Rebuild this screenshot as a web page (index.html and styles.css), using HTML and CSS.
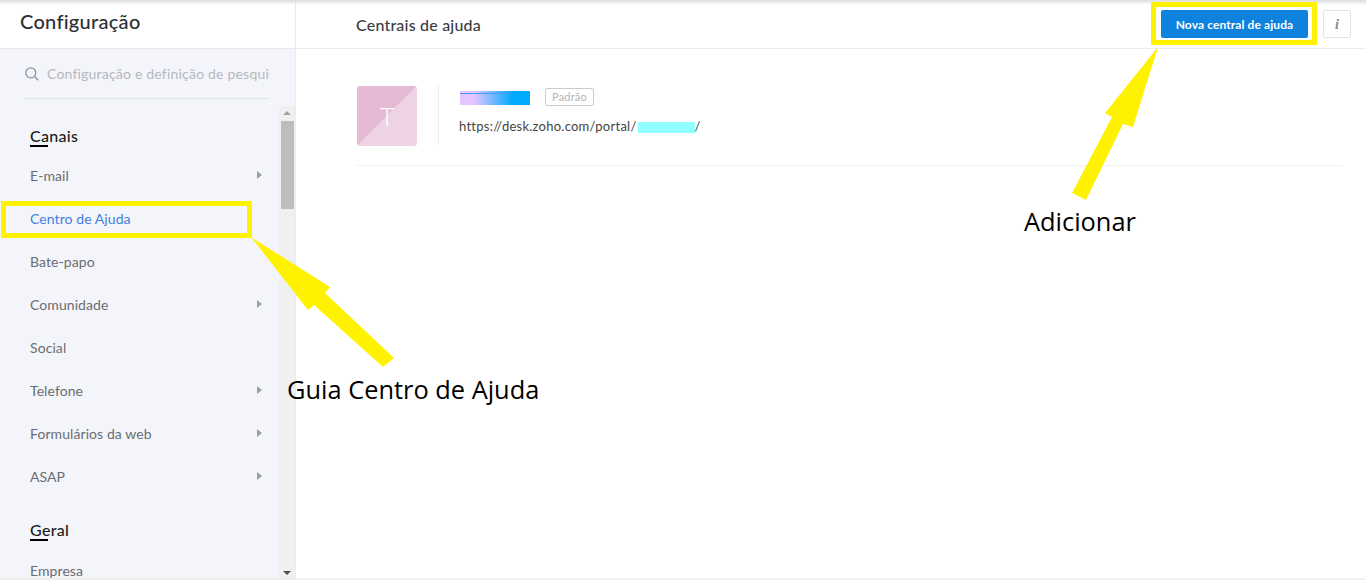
FILE: index.html
```html
<!DOCTYPE html>
<html lang="pt">
<head>
<meta charset="utf-8">
<title>Centrais de ajuda</title>
<link rel="stylesheet" href="styles.css">
</head>
<body>
<div class="app">
  <aside class="sidebar">
    <div class="side-head">Configuração</div>
    <div class="search">
      <svg class="search-icon" width="16" height="16" viewBox="0 0 16 16" fill="none" stroke="#8f949c" stroke-width="1.3"><circle cx="6.8" cy="6.8" r="5"/><path d="M10.5 10.5L14.2 14.2"/></svg>
      <span class="search-text">Configuração e definição de pesquisa</span>
    </div>
    <div class="side-body">
      <nav class="nav">
        <h3 class="sec">Canais</h3>
        <a class="item">E-mail<i class="caret"></i></a>
        <a class="item active">Centro de Ajuda</a>
        <a class="item">Bate-papo</a>
        <a class="item">Comunidade<i class="caret"></i></a>
        <a class="item">Social</a>
        <a class="item">Telefone<i class="caret"></i></a>
        <a class="item">Formulários da web<i class="caret"></i></a>
        <a class="item">ASAP<i class="caret"></i></a>
        <h3 class="sec sec-2">Geral</h3>
        <a class="item">Empresa</a>
      </nav>
      <div class="scrollbar">
        <i class="sb-up"></i>
        <div class="sb-thumb"></div>
        <i class="sb-down"></i>
      </div>
    </div>
  </aside>
  <main class="main">
    <header class="top">
      <h1 class="title">Centrais de ajuda</h1>
      <button class="btn">Nova central de ajuda</button>
      <button class="info">i</button>
    </header>
    <section class="card">
      <div class="avatar">T</div>
      <div class="sep"></div>
      <div class="meta">
        <div class="name-row"><span class="name-blur"></span><span class="badge">Padrão</span></div>
        <div class="url">https://desk.zoho.com/portal/<span class="url-blur"></span>/</div>
      </div>
    </section>
  </main>
</div>

<div class="mark mark-side"></div>
<div class="mark mark-btn"></div>
<svg class="arrows" width="1366" height="580" viewBox="0 0 1366 580">
  <polygon fill="#fff200" points="251,237 330,287 325,293 394,358 383,367 314,305 308,310"/>
  <polygon fill="#fff200" points="1158,47 1133,127 1123,124 1086,200 1072,193 1112,117 1105,113"/>
</svg>
<div class="note note-side">Guia Centro de Ajuda</div>
<div class="note note-btn">Adicionar</div>
</body>
</html>
```
FILE: styles.css
```css
* { box-sizing: border-box; }
html, body { margin: 0; height: 100%; overflow: hidden; background: #fff; }
body { font-family: "Lato", "Open Sans", sans-serif; color: #333; position: relative; }
.app { display: flex; height: 580px; }
.app::before {
  content: ""; position: absolute; left: 0; right: 0; top: 0; height: 5px;
  background: linear-gradient(#dcdcdc, rgba(255,255,255,0));
}
.app::after {
  content: ""; position: absolute; left: 0; right: 0; bottom: 0; height: 3px;
  background: linear-gradient(rgba(238,238,238,0), #ececec);
}
.sidebar { width: 296px; flex: none; display: flex; flex-direction: column; border-right: 1px solid #e9ebef; background: #f3f5fa; }
.side-head { height: 49px; background: #fff; border-bottom: 1px solid #e6e8ee; padding: 9px 0 0 20px; font-size: 20px; line-height: 25px; color: #2b2f36; font-weight: 500; flex: none; letter-spacing: .28px; }
.search { height: 50px; margin: 0 25px 0 24px; border-bottom: 1px solid #dfe2e9; display: flex; align-items: center; flex: none; overflow: hidden; }
.search-icon { flex: none; margin-right: 7px; }
.search-text { font-size: 14px; color: #b5b8bf; white-space: nowrap; letter-spacing: .2px; }
.side-body { flex: 1; display: flex; min-height: 0; }
.nav { flex: 1; overflow: hidden; padding-top: 24px; }
.sec { margin: 0 0 5px 30px; font-size: 16px; line-height: 25px; height: 26px; font-weight: 500; color: #1c1c1c; letter-spacing: .3px; position: relative; }
.sec::after { content: ""; position: absolute; left: 0; top: 22px; width: 18px; height: 2px; background: #000; }
.sec-2 { margin-top: 19px; margin-bottom: 6px; }
.item { display: flex; align-items: center; justify-content: space-between; height: 43px; padding: 0 17px 0 30px; font-size: 14px; color: #6a6d72; letter-spacing: .08px; }
.active { color: #3f7fe0; }
.caret { width: 0; height: 0; border-left: 5px solid #9b9ea3; border-top: 4px solid transparent; border-bottom: 4px solid transparent; margin-bottom: 1px; }
.scrollbar { width: 16px; margin-top: 7px; background: #f0f0f0; flex: none; display: flex; flex-direction: column; align-items: center; position: relative; }
.sb-up { margin-top: 5px; width: 0; height: 0; border-left: 4px solid transparent; border-right: 4px solid transparent; border-bottom: 4px solid #a3a3a3; }
.sb-thumb { width: 13px; height: 88px; background: #bdbdbd; margin-top: 6px; }
.sb-down { margin-top: auto; margin-bottom: 5px; width: 0; height: 0; border-left: 4px solid transparent; border-right: 4px solid transparent; border-top: 4px solid #4f4f4f; }
.main { flex: 1; min-width: 0; }
.top { height: 49px; border-bottom: 1px solid #e9ebef; display: flex; align-items: flex-start; padding: 10px 15px 0 60px; }
.title { margin: 0 auto 0 0; font-size: 16px; line-height: 30px; font-weight: 500; color: #3a3d42; letter-spacing: .2px; }
.btn { width: 147px; height: 28px; background: #0d82df; color: #fff; border: 0; border-radius: 2px; font: 700 12px "Lato", sans-serif; letter-spacing: .1px; padding: 0; }
.info { width: 28px; height: 28px; margin-left: 15px; background: #fff; border: 1px solid #e2e3e6; border-radius: 2px; padding: 2px 0 0; color: #85888d; font: italic 700 14px "Liberation Serif", serif; }
.card { margin: 36px 24px 0 61px; height: 81px; border-bottom: 1px solid #f0f1f3; display: flex; align-items: flex-start; }
.avatar { width: 60px; height: 60px; margin-top: 1px; border-radius: 3px; background: linear-gradient(135deg, #e5bad5 50%, #edd3e4 50%); color: #fff; font-size: 26px; font-weight: 300; display: flex; align-items: center; justify-content: center; }
.sep { width: 1px; height: 60px; background: #eceded; margin: 0 20px 0 21px; }
.meta { padding-top: 3px; }
.name-row { display: flex; align-items: center; height: 18px; }
.name-blur { width: 70px; height: 14px; margin-top: 2px; margin-left: 1px; background: linear-gradient(90deg, #e4c5ff 20%, #00aaff 75%); position: relative; }
.name-blur::before { content: ""; position: absolute; left: 0; top: 2px; width: 55px; height: 1px; background: #3d9ff0; }
.badge { margin-left: 15px; width: 49px; height: 18px; border: 1px solid #ccc; border-radius: 2px; text-align: center; font-size: 11px; line-height: 16px; color: #b3b6bb; letter-spacing: .2px; }
.url { margin-top: 11px; font-size: 13px; line-height: 18px; color: #444; letter-spacing: .25px; display: flex; align-items: center; }
.url-blur { width: 57px; height: 11px; margin-top: 2px; margin-left: 1px; background: #8fffff; }
.mark { position: absolute; border: 5px solid #fff200; }
.mark-side { left: 1px; top: 201px; width: 251px; height: 37px; }
.mark-btn { left: 1151px; top: 2px; width: 166px; height: 43px; }
.arrows { position: absolute; left: 0; top: 0; pointer-events: none; }
.note { position: absolute; font-family: "Open Sans", sans-serif; font-size: 25.4px; line-height: 34px; color: #000; white-space: nowrap; }
.note-side { left: 287px; top: 372px; }
.note-btn { left: 1024px; top: 204px; }
```
